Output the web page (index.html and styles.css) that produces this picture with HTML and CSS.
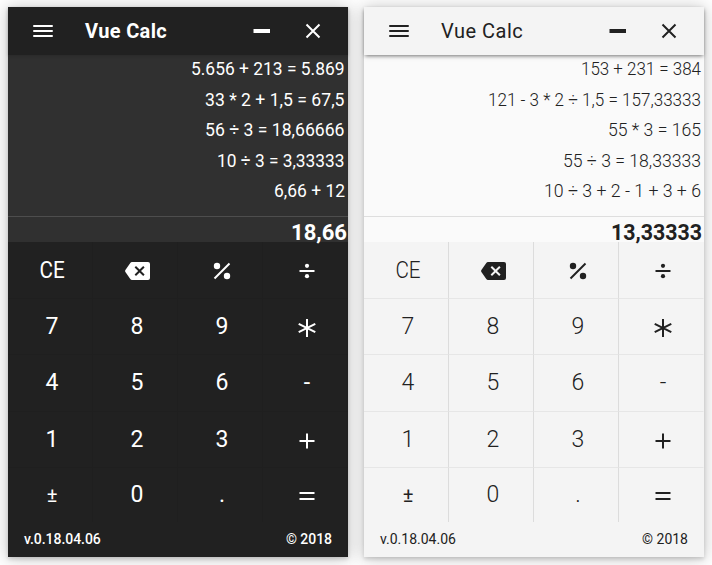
FILE: index.html
```html
<!DOCTYPE html>
<html lang="en">
<head>
<meta charset="utf-8">
<title>Vue Calc</title>
<link rel="stylesheet" href="styles.css">
</head>
<body>
<svg class="defs" aria-hidden="true">
  <symbol id="menu" viewBox="0 0 20 14"><path d="M1 2h18M1 7h18M1 12h18" fill="none" stroke="currentColor" stroke-width="2" stroke-linecap="round"/></symbol>
  <symbol id="minus" viewBox="0 0 18 4"><path d="M.5 0h16.500v4H.5z" fill="currentColor"/></symbol>
  <symbol id="close" viewBox="0 0 16 16"><path d="M1.500 1.500l13 13M14.500 1.500l-13 13" fill="none" stroke="currentColor" stroke-width="2"/></symbol>
  <symbol id="back" viewBox="0 0 25 18"><path fill="currentColor" fill-rule="evenodd" d="M7 0H23Q25 0 25 2V16Q25 18 23 18H7Q6 18 5.300 17L.4 10Q-.2 9 .4 8L5.300 1Q6 0 7 0ZM11 4L9.600 5.400 13.200 9 9.600 12.600 11 14 14.600 10.400 18.200 14 19.600 12.600 16 9 19.600 5.400 18.200 4 14.600 7.600Z"/></symbol>
  <symbol id="percent" viewBox="0 0 18 18"><g fill="currentColor"><circle cx="4" cy="4" r="3.200"/><circle cx="14" cy="14" r="3.200"/></g><path d="M1.500 16.500l15-15" stroke="currentColor" stroke-width="1.900"/></symbol>
  <symbol id="divide" viewBox="0 0 16 16"><g fill="currentColor"><circle cx="8" cy="2.800" r="2.100"/><circle cx="8" cy="13.200" r="2.100"/><path d="M.5 7h15v2H.5z"/></g></symbol>
  <symbol id="times" viewBox="0 0 18 18"><path d="M9 0v18M.7 4.800l16.600 8.400M17.300 4.800L.7 13.200" fill="none" stroke="currentColor" stroke-width="2"/></symbol>
  <symbol id="plus" viewBox="0 0 16 16"><path d="M8 .5v15M.5 8h15" fill="none" stroke="currentColor" stroke-width="2"/></symbol>
  <symbol id="equals" viewBox="0 0 16 10"><path d="M.5 2h15M.5 8h15" fill="none" stroke="currentColor" stroke-width="2"/></symbol>
</svg>
<main class="stage">
  <section class="calc dark">
    <header class="bar">
      <svg class="i-menu"><use href="#menu"/></svg>
      <h1 class="title">Vue Calc</h1>
      <svg class="i-minus"><use href="#minus"/></svg>
      <svg class="i-close"><use href="#close"/></svg>
    </header>
    <div class="display">
      <svg class="line"><text x="183" y="19.500" textLength="153.500" lengthAdjust="spacingAndGlyphs">5.656 + 213 = 5.869</text></svg>
      <svg class="line"><text x="197" y="19.500" textLength="139.500" lengthAdjust="spacingAndGlyphs">33 * 2 + 1,5 = 67,5</text></svg>
      <svg class="line"><text x="197" y="19.500" textLength="139.500" lengthAdjust="spacingAndGlyphs">56 ÷ 3 = 18,66666</text></svg>
      <svg class="line"><text x="209" y="19.500" textLength="127.500" lengthAdjust="spacingAndGlyphs">10 ÷ 3 = 3,33333</text></svg>
      <svg class="line"><text x="266" y="19.500" textLength="71" lengthAdjust="spacingAndGlyphs">6,66 + 12</text></svg>
      <svg class="result"><text x="283" y="23" textLength="56" lengthAdjust="spacingAndGlyphs">18,66</text></svg>
    </div>
    <div class="keys">
      <div class="key"><span class="ce">CE</span></div><div class="key"><svg class="i-back"><use href="#back"/></svg></div><div class="key"><svg class="i-18"><use href="#percent"/></svg></div><div class="key"><svg class="i-16"><use href="#divide"/></svg></div>
      <div class="key">7</div><div class="key">8</div><div class="key">9</div><div class="key"><svg class="i-18 low"><use href="#times"/></svg></div>
      <div class="key">4</div><div class="key">5</div><div class="key">6</div><div class="key">-</div>
      <div class="key">1</div><div class="key">2</div><div class="key">3</div><div class="key"><svg class="i-16 low"><use href="#plus"/></svg></div>
      <div class="key"><span class="pm">±</span></div><div class="key">0</div><div class="key">.</div><div class="key"><svg class="i-eq low"><use href="#equals"/></svg></div>
    </div>
    <footer class="foot"><span>v.0.18.04.06</span><span>© 2018</span></footer>
  </section>
  <section class="calc light">
    <header class="bar">
      <svg class="i-menu"><use href="#menu"/></svg>
      <h1 class="title">Vue Calc</h1>
      <svg class="i-minus"><use href="#minus"/></svg>
      <svg class="i-close"><use href="#close"/></svg>
    </header>
    <div class="display">
      <svg class="line"><text x="217" y="19.500" textLength="120" lengthAdjust="spacingAndGlyphs">153 + 231 = 384</text></svg>
      <svg class="line"><text x="124" y="19.500" textLength="213" lengthAdjust="spacingAndGlyphs">121 - 3 * 2 ÷ 1,5 = 157,33333</text></svg>
      <svg class="line"><text x="244" y="19.500" textLength="93" lengthAdjust="spacingAndGlyphs">55 * 3 = 165</text></svg>
      <svg class="line"><text x="199" y="19.500" textLength="138" lengthAdjust="spacingAndGlyphs">55 ÷ 3 = 18,33333</text></svg>
      <svg class="line"><text x="180" y="19.500" textLength="157" lengthAdjust="spacingAndGlyphs">10 ÷ 3 + 2 - 1 + 3 + 6</text></svg>
      <svg class="result"><text x="247" y="23" textLength="91" lengthAdjust="spacingAndGlyphs">13,33333</text></svg>
    </div>
    <div class="keys">
      <div class="key"><span class="ce">CE</span></div><div class="key"><svg class="i-back"><use href="#back"/></svg></div><div class="key"><svg class="i-18"><use href="#percent"/></svg></div><div class="key"><svg class="i-16"><use href="#divide"/></svg></div>
      <div class="key">7</div><div class="key">8</div><div class="key">9</div><div class="key"><svg class="i-18 low"><use href="#times"/></svg></div>
      <div class="key">4</div><div class="key">5</div><div class="key">6</div><div class="key">-</div>
      <div class="key">1</div><div class="key">2</div><div class="key">3</div><div class="key"><svg class="i-16 low"><use href="#plus"/></svg></div>
      <div class="key"><span class="pm">±</span></div><div class="key">0</div><div class="key">.</div><div class="key"><svg class="i-eq low"><use href="#equals"/></svg></div>
    </div>
    <footer class="foot"><span>v.0.18.04.06</span><span>© 2018</span></footer>
  </section>
</main>
</body>
</html>
```
FILE: styles.css
```css
* { box-sizing: border-box; }
body { margin: 0; background: #fff; font-family: Roboto, "Liberation Sans", sans-serif; overflow: hidden; }
svg { display: block; flex: none; }
.defs { display: none; }
.stage { display: flex; gap: 16px; padding: 7px 8px 8px; height: 565px; }
.calc { width: 340px; height: 550px; display: flex; flex-direction: column; box-shadow: 0 1px 16px 1px rgba(0,0,0,.22), 0 2px 4px rgba(0,0,0,.15); }
.dark { background: #212121; color: #fff; --display: #303030; --rule: #4d4d4d; --line: #1f1f1f; --w: 400; }
.light { background: #f4f4f4; color: #212121; --display: #fafafa; --rule: #dedede; --line: #dcdcdc; --w: 300; }
.bar { height: 48px; flex: none; display: flex; align-items: center; padding: 0 27px 0 25px; position: relative; }
.dark .bar { box-shadow: 0 1px 3px rgba(0,0,0,.15); }
.light .bar { box-shadow: 0 2px 4px -1px rgba(0,0,0,.55); }
.title { margin: 0 auto 0 32px; font-size: 20px; line-height: 24px; }
.dark .title { font-weight: 700; letter-spacing: .35px; }
.light .title { font-weight: 400; letter-spacing: .5px; }
.i-menu { width: 20px; height: 14px; }
.i-minus { width: 18px; height: 4px; margin-right: 34.5px; }
.i-close { width: 16px; height: 16px; }
.display { height: 187px; flex: none; background: var(--display); }
.line { width: 340px; height: 30.6px; overflow: visible; fill: currentColor; font-size: 18px; font-weight: var(--w); }
.result { width: 340px; height: 26px; margin-top: 8px; border-top: 1px solid var(--rule); overflow: visible; fill: currentColor; font-size: 22.500px; font-weight: 700; }
.keys { height: 280px; flex: none; display: grid; grid-template-columns: repeat(4, 85px); grid-template-rows: 57px repeat(3, 56.300px) 54.100px; }
.key { display: flex; align-items: center; justify-content: center; padding: 1px 0 0 4px; border-right: 1px solid var(--line); border-bottom: 1px solid var(--line); font-size: 23px; line-height: 28px; font-weight: var(--w); }
.key:nth-child(4n) { border-right-color: transparent; }
.key:nth-child(n+17) { border-bottom: 0; }
.light .key { border-bottom-color: #e6e6e6; }
.ce { transform: scaleX(.9); }
.pm { font-size: 20px; font-weight: 400; }
.i-back { width: 25px; height: 18px; }
.i-18 { width: 18px; height: 18px; }
.i-16 { width: 16px; height: 16px; }
.i-eq { width: 16px; height: 10px; }
.low { margin-top: 2px; }
.foot { flex: 1; display: flex; justify-content: space-between; align-items: center; padding: 0 16px 1px; font-size: 14px; }
.dark .foot { font-weight: 500; letter-spacing: -.05px; }
```
